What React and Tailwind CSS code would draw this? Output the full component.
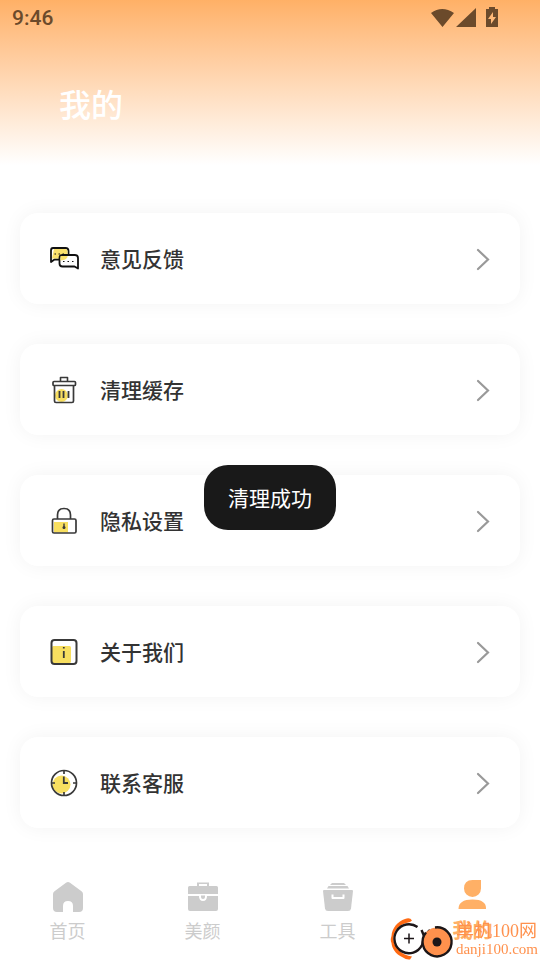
import React, { useState } from 'react';

function FeedbackIcon() {
  return (
    <svg viewBox="0 0 30 30" className="size-[30px]" fill="none" stroke="#111" strokeWidth="1.8" strokeLinejoin="round">
      <path d="M4 4h12.500q3 0 3 3v6q0 2.500-3 2.500H5.500L2 18V6.500q0-2.500 2-2.500z" fill="#fff" />
      <path d="M5 5h11q2.500 0 2.500 2.500v5q0 2-2 2H3z" fill="#fbe16b" stroke="none" />
      <path d="M13.500 11h12.500q3 0 3 3V24.500l-3.500-2H13.500q-3 0-3-3V14q0-3 3-3z" fill="#fff" />
      <path d="M11.500 12h7v1q-1 3-7 3.500z" fill="#fbe16b" stroke="none" />
      <path d="M5.500 10h1.500M9.500 10h1.500M13.500 10h1.500M14 17.500h1.500M18.500 17.500h1.500M23 17.500h1.500" strokeWidth="1.200" />
    </svg>
  );
}

function TrashIcon() {
  return (
    <svg viewBox="0 0 30 30" className="size-[30px]" fill="none" stroke="#393939" strokeWidth="1.700" strokeLinejoin="round">
      <circle cx="12.500" cy="20.500" r="6.500" fill="#f8df60" stroke="none" />
      <path d="M11.500 6.500V2.500h7v4" strokeWidth="1.600" />
      <rect x="4" y="6.500" width="22.500" height="4" rx="1" fill="#fff" />
      <path d="M5.500 10.500V26q0 1.500 1.500 1.500h16q1.500 0 1.500-1.500V10.500" />
      <path d="M10.500 16v7M14.500 16v7M19.500 16v7" strokeWidth="1.800" />
    </svg>
  );
}

function LockIcon() {
  return (
    <svg viewBox="0 0 30 30" className="size-[30px]" fill="none" stroke="#393939" strokeWidth="1.700" strokeLinejoin="round">
      <path d="M5 16h14v10.500H5z" fill="#f8df60" stroke="none" />
      <rect x="3.500" y="13" width="23.500" height="14" rx="1.500" />
      <path d="M8.500 13V9q0-6.500 6.500-6.500T21.500 9v4" />
      <path d="M15 17.500v5" strokeWidth="1.400" />
      <circle cx="15" cy="21.500" r="1.500" fill="#393939" stroke="none" />
    </svg>
  );
}

function AboutIcon() {
  return (
    <svg viewBox="0 0 30 30" className="size-[30px]" fill="none" stroke="#393939" strokeWidth="2">
      <rect x="3" y="9" width="19" height="17" rx="1.500" fill="#f8df60" stroke="none" />
      <rect x="2.500" y="3" width="25" height="24" rx="3" />
      <path d="M14.800 10v1.500M14.800 14v7" strokeWidth="1.800" />
    </svg>
  );
}

function ClockIcon() {
  return (
    <svg viewBox="0 0 30 30" className="size-[30px]" fill="none" stroke="#393939" strokeWidth="1.700">
      <circle cx="12.500" cy="16.500" r="9" fill="#f8df60" stroke="none" />
      <circle cx="15" cy="15" r="12.500" />
      <path d="M15 2.500v3.500M15 24v3.500M2.500 15H6M24 15h3.500" />
      <path d="M14.800 8.500V15H19" strokeWidth="1.800" />
    </svg>
  );
}

function HomeIcon() {
  return (
    <svg viewBox="0 0 30 30" className="size-[30px]" fill="currentColor">
      <path d="M13 .7q2-1.200 4 0l11.500 8.500Q30 10.500 30 12v14q0 4-4 4h-6v-6q0-5-5-5t-5 5v6H4q-4 0-4-4V12q0-1.500 1.500-2.800z" />
    </svg>
  );
}

function BeautyIcon() {
  return (
    <svg viewBox="0 0 30 30" className="size-[30px]" fill="currentColor">
      <path d="M9 4V.500h12V4h7.500Q30 4 30 5.500V12H0V5.500Q0 4 1.500 4zm2 0h8V2h-8z" />
      <path d="M0 14h11q0 5 4 5t4-5h11v13q0 2-2 2H2q-2 0-2-2z" />
      <path d="M13 13.500h4v1.500q0 2-2 2t-2-2z" />
    </svg>
  );
}

function ToolsIcon() {
  return (
    <svg viewBox="0 0 30 30" className="size-[30px]" fill="currentColor">
      <path d="M7 3l2-2h12l2 2zM4 6.500l1.500-2.500h19L26 6.500z" />
      <path d="M1 8h28q1 0 1 1l-2 17.500q-.4 2.500-3 2.500H5q-2.600 0-3-2.500L0 9q0-1 1-1z" />
      <path d="M9.500 12.500V16h11v-3.500" fill="none" stroke="#fff" strokeWidth="2" strokeLinejoin="round" />
    </svg>
  );
}

function MineIcon() {
  return (
    <svg viewBox="0 0 30 30" className="size-[30px]" fill="currentColor">
      <path d="M14.500 0H23v8.500a8.500 8.500 0 0 1-17 0Q6 0 14.500 0zM.500 29q0-9.500 14-9.500T28 29z" />
    </svg>
  );
}

function WatermarkLogo() {
  return (
    <svg viewBox="0 0 64 42" className="h-[42px] w-16 shrink-0" fill="none">
      <path d="M15 1Q20-1 22 2.500L20 4C9 6 3.500 12 3.500 21S12 37 22 38.500L20 41.500Q16 42 13 39.500C5 36 2 30 1.500 25Q0 22 1.500 18C2 10 8 3 15 1z" fill="#ff6a13" />
      <circle cx="19" cy="20.500" r="14" fill="#fff" />
      <path d="M27.500 9A14.500 14.500 0 1 0 32 27C34 21 35 16 40 12" stroke="#1c1618" strokeWidth="2.400" />
      <path d="M31.500 12l3 7" stroke="#1c1618" strokeWidth="2.400" />
      <path d="M19 15.500v10M14 20.500h10" stroke="#1c1618" strokeWidth="1.500" />
      <circle cx="47" cy="24" r="14.500" fill="#ff914d" />
      <path d="M45 9.500A14.500 14.500 0 1 1 36 14.500" stroke="#1c1618" strokeWidth="2.400" />
      <circle cx="47" cy="24" r="4.500" fill="#1c1618" />
    </svg>
  );
}

const menus = [
  { name: '意见反馈', Icon: FeedbackIcon },
  { name: '清理缓存', Icon: TrashIcon },
  { name: '隐私设置', Icon: LockIcon },
  { name: '关于我们', Icon: AboutIcon },
  { name: '联系客服', Icon: ClockIcon },
];

const tabs = [
  { name: '首页', Icon: HomeIcon },
  { name: '美颜', Icon: BeautyIcon },
  { name: '工具', Icon: ToolsIcon },
  { name: '我的', Icon: MineIcon },
];

export default function App() {
  const [active, setActive] = useState('我的');
  const [toast, setToast] = useState('清理成功');

  return (
    <div className="relative flex min-h-screen flex-col bg-white font-['Noto_Sans_CJK_SC',sans-serif]">
      {/* 顶部渐变 */}
      <header className="h-[165px] bg-linear-to-b from-[#ffb066] to-white">
        <div className="flex h-9 items-center justify-between pr-10 pl-3 text-[#6b4a2b]">
          <span className="pt-0.5 font-['Roboto',sans-serif] text-[21px] font-medium">9:46</span>
          <svg viewBox="0 0 70 22" className="h-[22px] w-[70px]" fill="currentColor">
            <path d="M1 6Q12-2 24 6L12.500 20zM46 1v19H26z" />
            <path d="M59 2V0h6v2h3v18H56V2zm4 3l-5 7h3v5l5-7h-3z" fillRule="evenodd" />
          </svg>
        </div>
        <h1 className="pt-11 pl-[59px] text-[32px] leading-[46px] font-medium text-white">我的</h1>
      </header>

      {/* 菜单 */}
      <main className="flex flex-col gap-10 px-5 pt-12">
        {menus.map(({ name, Icon }) => (
          <button
            key={name}
            onClick={() => setToast(name === '清理缓存' ? '清理成功' : '')}
            className="flex h-[91px] items-center rounded-[18px] bg-white pr-7 pl-[29px] text-left shadow-[0_0_20px_rgba(0,0,0,0.05)]"
          >
            <Icon />
            <span className="ml-[21px] flex-1 text-[21px] font-medium text-[#333]">{name}</span>
            <svg viewBox="0 0 18 24" className="h-6 w-[18px]" fill="none" stroke="#999" strokeWidth="2.200" strokeLinecap="round">
              <path d="M4 3l10 9.500L4 22" />
            </svg>
          </button>
        ))}
      </main>

      {/* 底部导航 */}
      <nav className="mt-auto grid grid-cols-4 items-end pt-10 pb-4">
        {tabs.map(({ name, Icon }) => (
          <button
            key={name}
            onClick={() => setActive(name)}
            className={
              active === name
                ? 'flex flex-col items-center gap-1.5 text-xl leading-7 font-bold text-[#ffb066]'
                : 'flex flex-col items-center gap-1 text-lg leading-7 text-[#ccc]'
            }
          >
            <Icon />
            {name}
          </button>
        ))}
      </nav>

      {/* 提示 */}
      {toast && (
        <div className="pointer-events-none fixed inset-0 flex items-center justify-center pt-[35px]">
          <div role="status" className="rounded-3xl bg-[#191919] px-6 py-4 text-[21px] leading-[33px] text-white">{toast}</div>
        </div>
      )}

      {/* 水印 */}
      <div className="pointer-events-none absolute right-0 bottom-0 flex items-center gap-0.5 pr-0.5">
        <WatermarkLogo />
        <div className="font-['Liberation_Serif','Noto_Sans_CJK_SC',serif] text-[#ff914d]">
          <div className="text-lg leading-5">单机100网</div>
          <div className="text-[15px] leading-4">danji100.com</div>
        </div>
      </div>
    </div>
  );
}
